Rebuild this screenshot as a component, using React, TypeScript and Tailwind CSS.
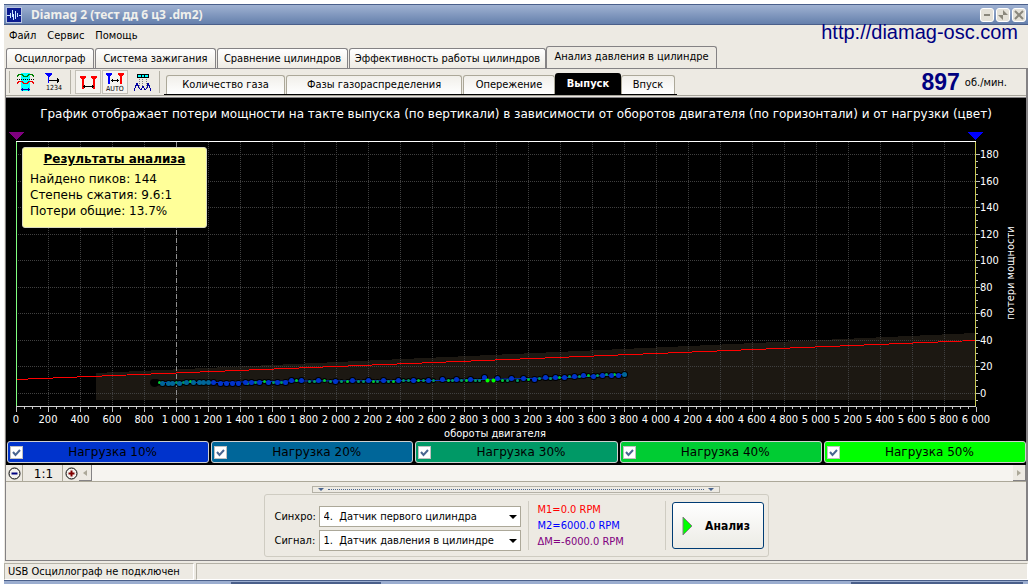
import { useState } from "react";
import clsx from "clsx";

const MAIN_TABS = [
  { label: "Осциллограф", width: "w-[88px]" },
  { label: "Система зажигания", width: "w-[121px]" },
  { label: "Сравнение цилиндров", width: "w-[131px]" },
  { label: "Эффективность работы цилиндров", width: "w-[197px]" },
  { label: "Анализ давления в цилиндре", width: "w-[171px]" },
];

const SUB_TABS = [
  { label: "Количество газа", width: "w-[119px]" },
  { label: "Фазы газораспределения", width: "w-[176px]" },
  { label: "Опережение", width: "w-[92px]" },
  { label: "Выпуск", width: "w-[66px]" },
  { label: "Впуск", width: "w-[54px]" },
];

const LOADS = [
  { label: "Нагрузка 10%", color: "bg-[#0033cc]" },
  { label: "Нагрузка 20%", color: "bg-[#006699]" },
  { label: "Нагрузка 30%", color: "bg-[#009966]" },
  { label: "Нагрузка 40%", color: "bg-[#00cc33]" },
  { label: "Нагрузка 50%", color: "bg-[#00ff00]" },
];

// Plot area inside the chart drawing
const X0 = 10;
const X1 = 970;
const Y_TOP = 11;
const Y_BOTTOM = 276;

const xOf = (rpm: number) => X0 + rpm * 0.16;
const yOf = (loss: number) => Math.round(263 - loss * 1.328);

const TEAL_POINTS = [
  [156, 253], [162, 253], [166, 253], [173, 253], [180, 252], [187, 252],
  [193, 252], [197, 252], [202, 252], [618, 244],
];

const BLUE_POINTS = [
  [207, 252], [214, 253], [220, 253], [226, 253], [232, 253], [239, 252], [245, 252],
  [253, 252], [262, 252], [271, 252], [279, 252], [285, 250], [295, 250], [312, 250],
  [329, 251], [346, 250], [362, 250], [377, 250], [392, 250], [407, 250], [422, 250],
  [436, 249], [450, 249], [464, 249], [478, 247], [491, 248], [505, 248], [517, 248],
  [528, 249], [539, 247], [549, 247], [558, 247], [568, 246], [577, 245], [587, 246],
  [596, 245], [605, 245], [612, 245],
];

const GREEN_POINTS = [
  [153, 252], [170, 252], [177, 252], [184, 251], [241, 253], [249, 252], [258, 251],
  [267, 252], [275, 252], [290, 250], [303, 251], [308, 251], [318, 250], [324, 251],
  [335, 251], [341, 251], [352, 251], [357, 251], [367, 251], [371, 251], [382, 251],
  [387, 251], [397, 250], [402, 250], [412, 250], [417, 250], [427, 250], [442, 250],
  [446, 250], [455, 250], [460, 250], [469, 250], [473, 250], [496, 250], [501, 250],
  [511, 250], [522, 249], [533, 248], [544, 248], [553, 247], [563, 246], [573, 246],
  [582, 245], [591, 245], [600, 244], [608, 244],
];

function AppIcon() {
  return (
    <svg width="16" height="16" viewBox="0 0 16 16">
      <rect width="16" height="16" fill="#b8c4e0" />
      <rect x="1" y="1" width="14" height="14" fill="#0a1a90" />
      <path
        d="M1 8.500h3M4.500 6v5M6.500 3v7M7.500 7v6M9.500 4v8M11.500 6v4M13 8.500h2"
        fill="none"
        stroke="#cfe6ff"
        shapeRendering="crispEdges"
      />
    </svg>
  );
}

function SignalIcon() {
  return (
    <svg width="20" height="20" viewBox="0 0 20 20" shapeRendering="crispEdges">
      <rect x="5" y="1" width="9" height="18" fill="#00ffff" />
      <path d="M1 4.500L3 2.500H6L8 4.500H11L13 2.500H16L18 4.500" fill="none" stroke="#008000" />
      <path d="M1 7.500h18" stroke="#000" strokeDasharray="1 1" />
      <path d="M1 11.500L3 9.500H6L8 11.500H11L13 9.500H16L18 11.500" fill="none" stroke="#f00000" />
      <path d="M5 17.500h9M6.500 16v3M12.500 16v3" stroke="#0000a0" />
    </svg>
  );
}

function CountIcon() {
  return (
    <svg width="18" height="20" viewBox="0 0 18 20" shapeRendering="crispEdges" className="overflow-visible">
      <path d="M1 1h7v1L5 5v6H4V5L1 2z" fill="#0000ff" />
      <path d="M5 8.500h10M13.500 6v5M14.500 7v3" stroke="#000" />
      <text x="2" y="18" className="text-[7px]" fontFamily="DejaVu Sans Condensed, sans-serif">
        1234
      </text>
    </svg>
  );
}

function MarkersIcon() {
  return (
    <svg width="18" height="20" viewBox="0 0 18 20" shapeRendering="crispEdges">
      <path d="M1 4h6v1L5 8v9H3V8L1 5zM12 4h6v1l-2 3v9h-2V8l-2-3z" fill="#ff0000" />
      <path d="M4 14.500h11M5.500 13v3M13.500 13v3" stroke="#000" />
    </svg>
  );
}

function AutoIcon() {
  return (
    <svg width="20" height="20" viewBox="0 0 20 20" shapeRendering="crispEdges" className="overflow-visible">
      <path d="M1 1h6v1L5 5v7H3V5L1 2z" fill="#0000ff" />
      <path d="M13 1h6v1l-2 3v7h-2V5l-2-3z" fill="#ff0000" />
      <path d="M6 8.500h8M7.500 7v3M12.500 7v3" stroke="#000" />
      <text x="1" y="19" className="text-[7px]" fontFamily="DejaVu Sans Condensed, sans-serif">
        AUTO
      </text>
    </svg>
  );
}

function PeaksIcon() {
  return (
    <svg width="19" height="19" viewBox="0 0 19 19" shapeRendering="crispEdges">
      <rect x="4" y="1" width="12" height="4" fill="#000" />
      <path d="M5 3h3M9 3h2M12 3h3" stroke="#00ffff" strokeWidth="2" />
      <path d="M6.500 6v9M9.500 6v9M13.500 6v9" stroke="#808080" strokeDasharray="1 1" />
      <path d="M1 18l1-3 2-5 2 5 2 2 2-4 2 4 2-2 1-5 2 5 1 3" fill="none" stroke="#0000a0" />
    </svg>
  );
}

function LossChart() {
  const rpmMajor = Array.from({ length: 31 }, (_, i) => i * 200);
  const rpmMinor = Array.from({ length: 121 }, (_, i) => i * 50);
  const lossMajor = Array.from({ length: 10 }, (_, i) => i * 20);
  const lossMinor = Array.from({ length: 38 }, (_, i) => i * 5 - 5);

  return (
    <svg viewBox="0 0 1020 311" className="block w-full" fontFamily="DejaVu Sans Condensed, sans-serif">
      <g shapeRendering="crispEdges">
        <path d="M90 243L969 203V270H90z" fill="#1c1812" />
        {rpmMajor.slice(1, -1).map((rpm) => (
          <path key={rpm} d={`M${xOf(rpm) + 0.5} ${Y_TOP + 1}V${Y_BOTTOM}`} stroke="#404040" strokeDasharray="1 1" />
        ))}
        {lossMajor.map((loss) => (
          <path key={loss} d={`M${X0} ${yOf(loss) + 0.5}H${X1}`} stroke="#404040" strokeDasharray="1 1" />
        ))}
        <path d="M170.500 12V276" stroke="#909090" strokeDasharray="5 3" />
        <path d="M10 249.500L969 210.500" stroke="#ff0000" />
        <path d={`M${X0} 11.500H${X1}`} stroke="#ffffff" />
        <path d={`M${X0} 276.500H${X1}`} stroke="#d0d0d0" />
        <path d="M10.500 12V276" stroke="#80ff80" />
        <path d="M969.500 12V276" stroke="#c8c850" />
        {rpmMinor.map((rpm) => (
          <path key={rpm} d={`M${xOf(rpm) + 0.5} 277v${rpm % 200 === 0 ? 5 : 2}`} stroke="#c0c0c0" />
        ))}
        {lossMinor.map((loss) => (
          <path key={loss} d={`M970 ${yOf(loss) + 0.5}h${loss % 20 === 0 ? 4 : 2}`} stroke="#c0c0c0" />
        ))}
        <path d="M2 2h16l-8 8z" fill="#800080" />
        <path d="M961 2h16l-8 8z" fill="#0000ff" />
      </g>

      {/* black halos first, so that the coloured dots stay whole */}
      <g fill="#000000">
        {[[147, 252], [148, 253], [150, 252], ...TEAL_POINTS, ...BLUE_POINTS].map(([x, y]) => (
          <circle key={x} cx={x + 0.5} cy={y + 0.5} r="3.500" />
        ))}
        {GREEN_POINTS.map(([x, y]) => (
          <circle key={x} cx={x + 0.5} cy={y + 0.5} r="2.500" />
        ))}
      </g>
      <path d="M153 252.500L210 252.500L285 251L430 250.500L500 249L560 247.500L618 244.500" fill="none" stroke="#0033cc" />
      {GREEN_POINTS.map(([x, y], i) => (
        <circle key={x} cx={x + 0.5} cy={y + 0.5} r="1.500" fill={i % 3 ? "#009966" : "#00cc33"} />
      ))}
      {TEAL_POINTS.map(([x, y]) => (
        <circle key={x} cx={x + 0.5} cy={y + 0.5} r="2.500" fill="#006699" />
      ))}
      {BLUE_POINTS.map(([x, y]) => (
        <circle key={x} cx={x + 0.5} cy={y + 0.5} r="2.500" fill="#0033cc" />
      ))}
      <circle cx="481.500" cy="250.500" r="2" fill="#00ff00" />
      <circle cx="487.500" cy="250.500" r="2" fill="#00ff00" />

      <g fill="#ffffff" className="text-[11px]">
        {rpmMajor.map((rpm) => (
          <text key={rpm} x={xOf(rpm)} y="293" textAnchor="middle">
            {rpm >= 1000 ? `${Math.floor(rpm / 1000)} ${String(rpm % 1000).padStart(3, "0")}` : rpm}
          </text>
        ))}
        {lossMajor.map((loss) => (
          <text key={loss} x="974" y={yOf(loss) + 4}>
            {loss}
          </text>
        ))}
        <text x="489" y="307" textAnchor="middle">
          обороты двигателя
        </text>
        <text transform="translate(1008 143) rotate(-90)" textAnchor="middle">
          потери мощности
        </text>
      </g>
    </svg>
  );
}

function LoadToggle({ label, color }: { label: string; color: string }) {
  const [checked, setChecked] = useState(true);

  return (
    <label
      className={clsx(
        "flex h-[22px] items-center rounded-[3px] border border-[#d0d0d0] pl-[2px] font-['DejaVu_Sans'] text-[12px] text-black",
        color
      )}
    >
      <span className="grid shrink-0">
        <input
          type="checkbox"
          checked={checked}
          onChange={(e) => setChecked(e.target.checked)}
          className="col-start-1 row-start-1 h-[13px] w-[13px] appearance-none border border-[#c0c0c0] bg-white"
        />
        {checked && (
          <svg width="13" height="13" viewBox="0 0 13 13" className="pointer-events-none col-start-1 row-start-1">
            <path d="M3 6l2.500 3L10 4" fill="none" stroke="#4a6590" strokeWidth="2" />
          </svg>
        )}
      </span>
      <span className="flex-1 pr-[6px] text-center">{label}</span>
    </label>
  );
}

function SensorSelect({ id, label, value }: { id: string; label: string; value: string }) {
  return (
    <div className="flex items-center">
      <label htmlFor={id} className="w-[44px]">
        {label}
      </label>
      <div className="grid items-center">
        <select
          id={id}
          className="col-start-1 row-start-1 h-[21px] w-[202px] appearance-none border border-[#aca899] bg-white pl-[4px]"
        >
          <option>{value}</option>
        </select>
        <svg
          width="8"
          height="4"
          viewBox="0 0 8 4"
          className="pointer-events-none col-start-1 row-start-1 mr-1 justify-self-end"
        >
          <path d="M0 0h8L4 4z" fill="#000" />
        </svg>
      </div>
    </div>
  );
}

function TitleBar() {
  const button =
    "flex h-[14px] w-[14px] items-center justify-center rounded-[3px] border border-white bg-[#e4e1d8] text-[#8a877c]";
  return (
    <header className="flex h-[21px] items-center border-y border-[#4a5f8a] bg-linear-to-b from-[#a0b2d2] to-[#6580ac] pr-[2px] pl-[2px]">
      <AppIcon />
      <h1 className="ml-[9px] flex-1 font-['Noto_Sans'] text-[12px] leading-4 font-bold text-[#f0f0ec]">
        Diamag 2 (тест дд 6 ц3 .dm2)
      </h1>
      <div className="flex gap-[2px]">
        <button className={button} aria-label="Свернуть">
          <svg width="8" height="8" viewBox="0 0 8 8">
            <path d="M1 4h6" stroke="currentColor" strokeWidth="2" />
          </svg>
        </button>
        <button className={button} aria-label="Восстановить">
          <svg width="10" height="10" viewBox="0 0 10 10" fill="currentColor">
            <path d="M5 0l5 5H5zM5 10L0 5h5z" />
          </svg>
        </button>
        <button className={button} aria-label="Закрыть">
          <svg width="10" height="10" viewBox="0 0 10 10">
            <path d="M1 1l8 8M9 1L1 9" stroke="currentColor" strokeWidth="2" />
          </svg>
        </button>
      </div>
    </header>
  );
}

export default function App() {
  const [mainTab, setMainTab] = useState(4);
  const [subTab, setSubTab] = useState(3);

  return (
    <div className="flex min-h-screen flex-col bg-white pt-1 font-['DejaVu_Sans_Condensed',sans-serif] text-[11px] leading-[14px] text-black">
      <div className="mx-1 flex flex-1 flex-col bg-[#edeae3]">
        <TitleBar />

        <div className="flex items-start justify-between">
          <div>
            <nav className="flex h-[21px] items-center gap-[11px] pl-[5px]">
              <button>Файл</button>
              <button>Сервис</button>
              <button>Помощь</button>
            </nav>
            <div className="flex h-[22px] items-end pl-[2px]" role="tablist">
              {MAIN_TABS.map((tab, i) => (
                <button
                  key={tab.label}
                  role="tab"
                  aria-selected={mainTab === i}
                  onClick={() => setMainTab(i)}
                  className={clsx(
                    "shrink-0 rounded-t-[3px] border border-b-0 border-[#848284] whitespace-nowrap",
                    tab.width,
                    mainTab === i ? "-mb-[1px] h-[23px] bg-[#edeae3] pb-[2px]" : "h-[20px] bg-linear-to-b from-white to-[#eeebe4]",
                    i < 3 && "mr-[1px]"
                  )}
                >
                  {tab.label}
                </button>
              ))}
            </div>
          </div>
          <a
            href="http://diamag-osc.com"
            className="mr-[10px] font-['Liberation_Sans'] text-[20px] leading-[15px] text-[#000080]"
          >
            http://diamag-osc.com
          </a>
        </div>

        <main className="ml-[1px] flex flex-1 flex-col border border-r-2 border-[#848284]">
          <div className="flex h-[27px] items-stretch border-b border-[#a8a59c]">
            <div className="my-[2px] ml-[3px] flex gap-[8px] border-l border-[#b4b1a6] pl-[6px]">
              <button aria-label="Сигнал">
                <SignalIcon />
              </button>
              <button aria-label="Нумерация">
                <CountIcon />
              </button>
            </div>
            <div className="my-[1px] ml-[8px] flex border-l border-[#b4b1a6] pl-[4px]">
              <button className="flex w-[26px] items-center justify-center border border-[#c4c1b8] bg-[#f6f4f0]" aria-label="Маркеры">
                <MarkersIcon />
              </button>
              <button className="ml-[1px] flex w-[26px] items-center justify-center border border-[#c4c1b8] bg-[#f6f4f0]" aria-label="Авто">
                <AutoIcon />
              </button>
              <button className="flex w-[28px] items-center justify-center" aria-label="Пики">
                <PeaksIcon />
              </button>
            </div>
            <div className="my-[2px] ml-[3px] border-l border-[#b4b1a6]" />
            <div className="ml-[4px] flex items-end self-end border-b border-black px-[2px]" role="tablist">
              {SUB_TABS.map((tab, i) => (
                <button
                  key={tab.label}
                  role="tab"
                  aria-selected={subTab === i}
                  onClick={() => setSubTab(i)}
                  className={clsx(
                    "shrink-0 rounded-t-[3px] whitespace-nowrap",
                    tab.width,
                    subTab === i
                      ? "h-[21px] bg-black font-bold text-white"
                      : "h-[19px] border border-b-0 border-[#aca899] bg-linear-to-b from-[#f1efea] to-white",
                    i < 2 && "mr-[1px]"
                  )}
                >
                  {tab.label}
                </button>
              ))}
            </div>
            <p className="mr-[19px] ml-auto flex items-center gap-[5px]">
              <strong className="font-['Liberation_Sans'] text-[23px] leading-[26px] text-[#000080]">897</strong>
              <span className="pt-[2px]">об./мин.</span>
            </p>
          </div>

          <section className="mt-[1px] border-t border-[#848284] bg-black pb-[2px]">
            <p className="h-[32px] text-center font-['DejaVu_Sans'] text-[12px] leading-[33px] whitespace-nowrap text-white">
              График отображает потери мощности на такте выпуска (по вертикали) в зависимости от оборотов двигателя (по
              горизонтали) и от нагрузки (цвет)
            </p>
            <div className="relative">
              <LossChart />
              <div className="absolute top-[17px] left-[16px] h-[81px] w-[185px] rounded-[3px] border border-[#d8d8c0] bg-[#ffff99] px-[7px] pt-[3px] font-['DejaVu_Sans'] text-[12px] leading-4">
                <h2 className="mb-[4px] text-center font-bold underline">Результаты анализа</h2>
                <p>Найдено пиков: 144</p>
                <p>Степень сжатия: 9.6:1</p>
                <p>Потери общие: 13.7%</p>
              </div>
            </div>
            <div className="grid grid-cols-5 gap-[2px] pl-[1px]">
              {LOADS.map((load) => (
                <LoadToggle key={load.label} {...load} />
              ))}
            </div>
          </section>

          <div className="flex h-[17px] border-b border-[#aca899]">
            <button className="flex w-[17px] items-center justify-center border-r border-[#aca899]" aria-label="Уменьшить">
              <svg width="13" height="13" viewBox="0 0 13 13">
                <circle cx="6.500" cy="6.500" r="5.500" fill="#f4f2ee" stroke="#000" />
                <path d="M3.500 6.500h6" stroke="#000080" strokeWidth="2" />
              </svg>
            </button>
            <button className="w-[40px] border-r border-[#aca899] pt-[2px] pl-[2px] font-['DejaVu_Sans'] text-[12px]">1:1</button>
            <button className="flex w-[16px] items-center justify-center" aria-label="Увеличить">
              <svg width="13" height="13" viewBox="0 0 13 13">
                <circle cx="6.500" cy="6.500" r="5.500" fill="#f4f2ee" stroke="#000" />
                <path d="M3.500 6.500h6M6.500 3.500v6" stroke="#800000" strokeWidth="2" />
              </svg>
            </button>
            <button className="flex w-[13px] items-center justify-center border-r border-b border-[#848284]" aria-label="Влево">
              <svg width="4" height="6" viewBox="0 0 4 6">
                <path d="M4 0v6L0 3z" fill="#aca899" />
              </svg>
            </button>
            <div className="flex-1 bg-[#f6f4f0]" />
            <button className="flex w-[13px] items-center justify-center border-r border-b border-[#848284]" aria-label="Вправо">
              <svg width="4" height="6" viewBox="0 0 4 6">
                <path d="M0 0v6l4-3z" fill="#aca899" />
              </svg>
            </button>
          </div>

          <div className="flex flex-col items-center pt-[4px] pb-[3px]">
            <div className="flex h-[7px] w-[408px] items-center justify-between border border-[#b4b1a6] px-[5px]">
              <svg width="6" height="3" viewBox="0 0 6 3">
                <path d="M0 0h6L3 3z" fill="#4a6590" />
              </svg>
              <div className="mx-[4px] flex-1 border-t border-dotted border-[#4a6590]" />
              <svg width="6" height="3" viewBox="0 0 6 3">
                <path d="M0 0h6L3 3z" fill="#4a6590" />
              </svg>
            </div>
            <div className="mt-[1px] flex h-[63px] w-[505px] items-center rounded-[3px] border border-[#cfccc2] pl-[10px]">
              <div className="flex flex-col gap-[3px] pt-[6px]">
                <SensorSelect id="sync" label="Синхро:" value={"4.\u00a0 Датчик первого цилиндра"} />
                <SensorSelect id="signal" label="Сигнал:" value={"1.\u00a0 Датчик давления в цилиндре"} />
              </div>
              <div className="ml-[7px] h-[49px] border-l border-[#cfccc2] pt-[1px] pl-[9px] leading-4">
                <p className="text-[#ff0000]">M1=0.0 RPM</p>
                <p className="text-[#0000ff]">M2=6000.0 RPM</p>
                <p className="text-[#800080]">ΔM=-6000.0 RPM</p>
              </div>
              <div className="mr-[6px] ml-auto h-[49px] border-l border-[#cfccc2]" />
              <button className="mr-[4px] flex h-[47px] w-[92px] items-center rounded-[3px] border border-[#003c74] bg-linear-to-b from-white to-[#ecebe5] pl-[9px] text-[12px] font-bold">
                <svg width="11" height="20" viewBox="0 0 11 20">
                  <path d="M1 1v18l9-9z" fill="#00ff00" stroke="#808080" />
                </svg>
                <span className="flex-1 text-center">Анализ</span>
              </button>
            </div>
          </div>
        </main>

        <footer className="mt-[2px] flex h-[17px] gap-[2px]">
          <p className="w-[190px] border border-[#b4b1a6] border-r-white border-b-white pt-[1px] pl-[3px]">
            USB Осциллограф не подключен
          </p>
          <div className="flex-1 border border-[#b4b1a6] border-r-white border-b-white" />
        </footer>
        <div className="flex h-[4px] border-t border-[#4a5f8a] bg-[#9badcf]">
          <div className="mt-[1px] ml-[227px] w-[150px] bg-[#4a5f8a]" />
          <div className="mt-[1px] mr-[5px] ml-auto w-[172px] bg-[#4a5f8a]" />
        </div>
      </div>
    </div>
  );
}
